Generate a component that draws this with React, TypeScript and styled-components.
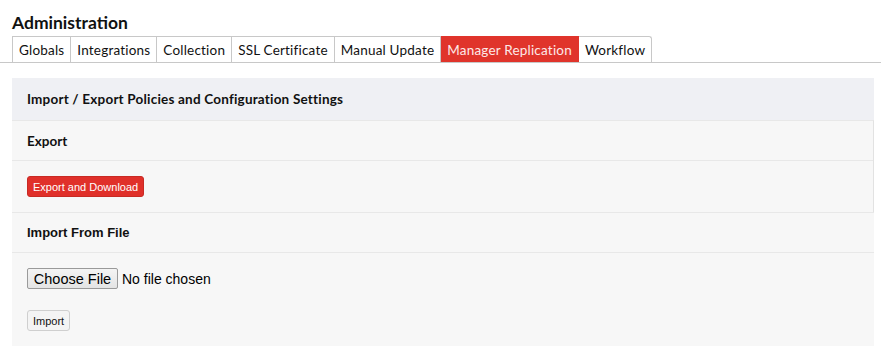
import styled, { createGlobalStyle } from "styled-components";

const Global = createGlobalStyle`
  *, *::before, *::after {
    box-sizing: border-box;
  }
  body {
    margin: 0;
    background: #fff;
    font-family: "Lato", "Open Sans", sans-serif;
    color: #111;
  }
`;

const tabs = [
  "Globals",
  "Integrations",
  "Collection",
  "SSL Certificate",
  "Manual Update",
  "Manager Replication",
  "Workflow",
];

const App = () => {
  return (
    <>
      <Global />
      <Title>Administration</Title>
      <TabBar>
        {tabs.map((label) => (
          <Tab key={`tab-${label}`} $active={label === "Manager Replication"}>
            {label}
          </Tab>
        ))}
      </TabBar>
      <Panel>
        <PanelHeader>Import / Export Policies and Configuration Settings</PanelHeader>
        <Section $bordered>
          <SectionTitle>Export</SectionTitle>
          <SectionBody>
            <RedButton>Export and Download</RedButton>
          </SectionBody>
        </Section>
        <Section>
          <SectionTitle $plain>Import From File</SectionTitle>
          <SectionBody>
            <FileRow>
              <ChooseButton>Choose File</ChooseButton>
              <FileName>No file chosen</FileName>
            </FileRow>
            <SmallButton>Import</SmallButton>
          </SectionBody>
        </Section>
      </Panel>
    </>
  );
};

const Title = styled.h1`
  margin: 0;
  padding: 13px 12px 3px;
  font-size: 17.5px;
  line-height: 20px;
  font-weight: 700;
  color: #111;
`;

const TabBar = styled.div`
  display: flex;
  padding-left: 12px;
  border-bottom: 1px solid #c8c8c8;
`;

const Tab = styled.div<{ $active?: boolean }>`
  height: 26px;
  padding: 0 6px;
  display: flex;
  align-items: center;
  font-size: 13.5px;
  letter-spacing: 0.2px;
  border: 1px solid #c8c8c8;
  border-bottom: none;
  border-left: none;
  &:first-child {
    border-left: 1px solid #c8c8c8;
  }
  &:last-child {
    border-top-right-radius: 3px;
  }
  background: ${({ $active }) => ($active ? "#e0342b" : "#fff")};
  color: ${({ $active }) => ($active ? "#fde9e8" : "#111")};
  border-top-color: ${({ $active }) => ($active ? "#e0342b" : "#c8c8c8")};
  border-right-color: ${({ $active }) => ($active ? "#e0342b" : "#c8c8c8")};
`;

const Panel = styled.div`
  margin: 15px 7px 0 12px;
  background: #f7f7f7;
`;

const PanelHeader = styled.div`
  height: 42px;
  display: flex;
  align-items: center;
  padding-left: 15px;
  background: #eff0f4;
  font-size: 13.5px;
  letter-spacing: 0.2px;
  font-weight: 700;
`;

const Section = styled.div<{ $bordered?: boolean }>`
  border-top: 1px solid #e8e8e8;
  border-right: ${({ $bordered }) => ($bordered ? "1px solid #e2e2e2" : "none")};
`;

const SectionTitle = styled.div<{ $plain?: boolean }>`
  height: 40px;
  display: flex;
  align-items: center;
  padding-left: 15px;
  font-size: ${({ $plain }) => ($plain ? "13px" : "13.5px")};
  font-weight: 700;
  font-family: ${({ $plain }) =>
    $plain ? '"Liberation Sans", Arial, sans-serif' : '"Lato", sans-serif'};
  border-bottom: 1px solid #e8e8e8;
`;

const SectionBody = styled.div`
  padding: 15px;
  display: flex;
  flex-direction: column;
  align-items: flex-start;
  gap: 21px;
`;

const RedButton = styled.button`
  height: 21px;
  padding: 0 5px;
  background: #e0302a;
  border: 1px solid #c82a24;
  border-radius: 3px;
  color: #fff;
  font-family: "Liberation Sans", Arial, sans-serif;
  font-size: 11px;
`;

const FileRow = styled.div`
  display: flex;
  align-items: center;
  gap: 4px;
`;

const ChooseButton = styled.button`
  height: 21px;
  width: 91px;
  padding: 0;
  background: linear-gradient(#f4f4f4, #e4e4e4);
  border: 1px solid #9a9a9a;
  border-radius: 2px;
  color: #000;
  font-family: "Liberation Sans", Arial, sans-serif;
  font-size: 14.5px;
`;

const FileName = styled.span`
  font-family: "Liberation Sans", Arial, sans-serif;
  font-size: 14px;
  color: #000;
`;

const SmallButton = styled.button`
  height: 21px;
  padding: 0 5px;
  background: #f4f4f4;
  border: 1px solid #cfcfcf;
  border-radius: 3px;
  color: #111;
  font-family: "Liberation Sans", Arial, sans-serif;
  font-size: 11px;
`;

export default App;
